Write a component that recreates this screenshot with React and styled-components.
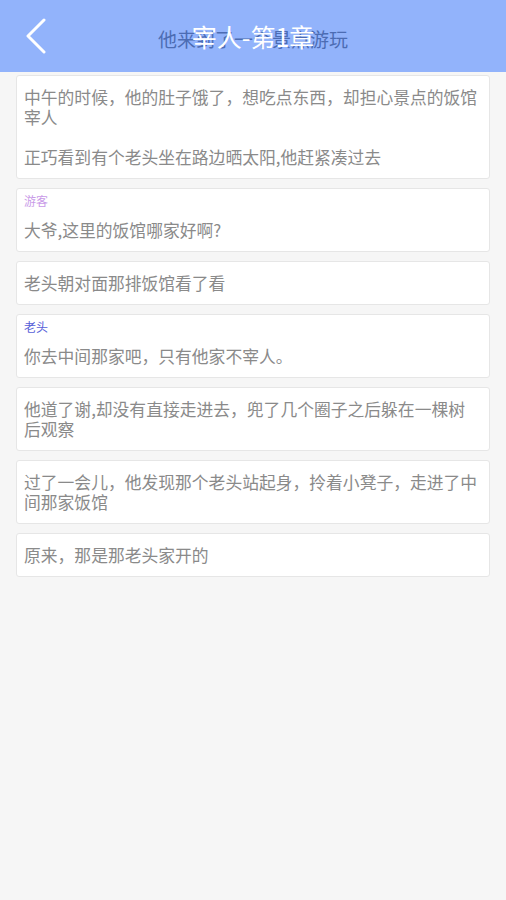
import React from 'react'
import styled, { createGlobalStyle } from 'styled-components'

const GlobalStyle = createGlobalStyle`
  html, body {
    margin: 0;
    padding: 0;
    background: #f6f6f6;
  }
  body {
    font-family: "Noto Sans CJK SC", "Noto Sans", "Liberation Sans", sans-serif;
  }
`

// 对话内容
const lines = [
  { text: ['中午的时候，他的肚子饿了，想吃点东西，却担心景点的饭馆宰人', '正巧看到有个老头坐在路边晒太阳,他赶紧凑过去'] },
  { who: '游客', color: '#c99be8', text: ['大爷,这里的饭馆哪家好啊?'] },
  { text: ['老头朝对面那排饭馆看了看'] },
  { who: '老头', color: '#5760d8', text: ['你去中间那家吧，只有他家不宰人。'] },
  { text: ['他道了谢,却没有直接走进去，兜了几个圈子之后躲在一棵树后观察'] },
  { text: ['过了一会儿，他发现那个老头站起身，拎着小凳子，走进了中间那家饭馆'] },
  { text: ['原来，那是那老头家开的'] },
]

const Page = styled.div`
  min-height: 900px;
  background: #f6f6f6;
`

const Header = styled.header`
  height: 72px;
  background: #92b3fb;
  display: grid;
  grid-template-columns: 1fr;
  align-items: center;
  > * {
    grid-area: 1 / 1;
  }
`

const BackButton = styled.button`
  justify-self: start;
  margin-left: 20px;
  width: 32px;
  height: 40px;
  padding: 0;
  border: none;
  background: none;
  display: flex;
  align-items: center;
  justify-content: center;
  z-index: 2;
`

const SubTitle = styled.div`
  justify-self: center;
  margin-top: 4px;
  font-size: 19px;
  color: #4c6cb3;
`

const Title = styled.h1`
  justify-self: center;
  margin: 0;
  font-size: 25px;
  font-weight: 400;
  color: #fff;
  z-index: 1;
`

const List = styled.main`
  display: flex;
  flex-direction: column;
  gap: 9px;
  padding: 3px 16px 20px;
`

const Card = styled.section`
  background: #fff;
  border: 1px solid #e6e6e6;
  border-radius: 3px;
  padding: 11px 9px 11px 7px;
`

const Speaker = styled.div`
  font-size: 12px;
  line-height: 14px;
  margin: -6px 0 12px;
  color: ${p => p.$color};
`

const Para = styled.p`
  margin: 0;
  font-size: 16.8px;
  line-height: 20px;
  color: #8a8a8a;
  & + & {
    margin-top: 20px;
  }
`

const App = () => {
  return (
    <Page>
      <GlobalStyle />
      <Header>
        <BackButton aria-label="back">
          <svg width="24" height="36" viewBox="0 0 24 36">
            <polyline points="20,2 4,18 20,34" fill="none" stroke="#fff" strokeWidth="3" strokeLinecap="round" strokeLinejoin="round" />
          </svg>
        </BackButton>
        <SubTitle>他来到了一个景点游玩</SubTitle>
        <Title>宰人-第1章</Title>
      </Header>
      <List>
        {lines.map((item, i) => (
          <Card key={i}>
            {item.who && <Speaker $color={item.color}>{item.who}</Speaker>}
            {item.text.map((t, j) => <Para key={j}>{t}</Para>)}
          </Card>
        ))}
      </List>
    </Page>
  )
}

export default App
